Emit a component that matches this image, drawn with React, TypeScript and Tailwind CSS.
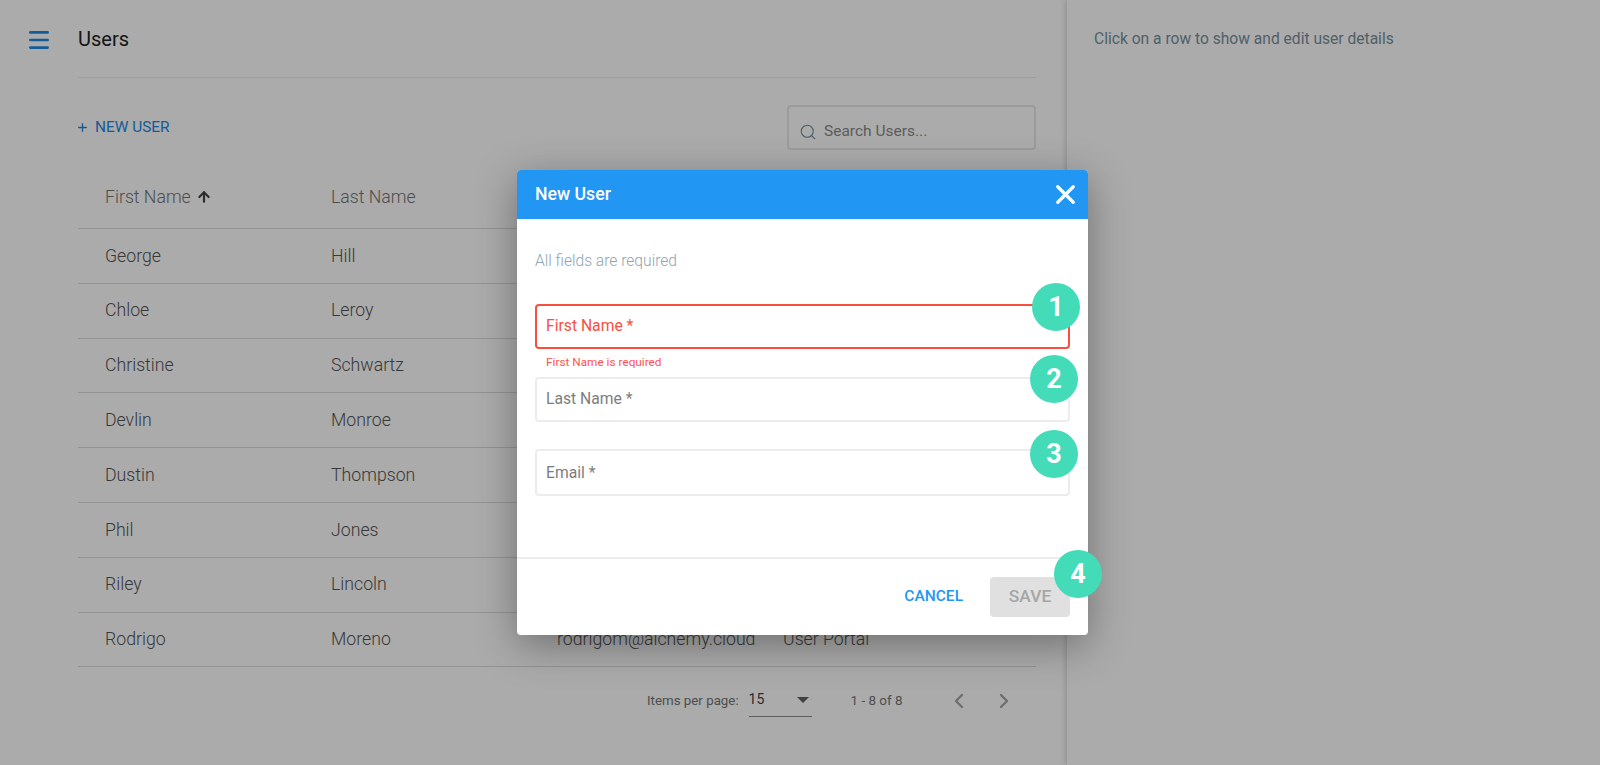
import { Menu, Plus, Search, ArrowUp, X, ChevronLeft, ChevronRight } from 'lucide-react'

const users = [
  { first: 'George', last: 'Hill' },
  { first: 'Chloe', last: 'Leroy' },
  { first: 'Christine', last: 'Schwartz' },
  { first: 'Devlin', last: 'Monroe' },
  { first: 'Dustin', last: 'Thompson' },
  { first: 'Phil', last: 'Jones' },
  { first: 'Riley', last: 'Lincoln' },
  { first: 'Rodrigo', last: 'Moreno', email: 'rodrigom@alchemy.cloud', app: 'User Portal' },
]

function Badge({ n, className }: { n: number; className: string }) {
  return (
    <div className={`absolute flex h-12 w-12 items-center justify-center rounded-full bg-[#43dbb8] text-[27px] font-bold text-white ${className}`}>
      {n}
    </div>
  )
}

function Field({ label, error, tall }: { label: string; error?: boolean; tall?: boolean }) {
  return (
    <div className={`flex items-center rounded-[4px] border-2 pl-[9px] text-[15.7px] ${tall ? 'h-[47px]' : 'h-[45px] pb-[2px]'} ${error ? 'border-[#f7503f] text-[#f7503f]' : 'border-[#ececec] text-[#7d7d7d]'}`}>
      {label}
    </div>
  )
}

export default function App() {
  return (
    <div className="relative flex h-[765px] w-full overflow-hidden bg-white font-['Roboto',sans-serif]">
      <div className="flex w-[1067px] shrink-0">
        <div className="w-[78px] shrink-0 pl-[26px] pt-[27px]">
          <Menu className="h-[26px] w-[26px] text-[#1e88e5]" strokeWidth={2.4} />
        </div>
        <div className="flex w-[958px] flex-col">
          <div className="flex h-[78px] items-start border-b border-[#ececec] pt-[25px] text-[20px] leading-[28px] text-[#212121]">
            Users
          </div>
          <div className="flex h-[74px] items-start justify-between">
            <div className="mt-[39px] -ml-[2px] flex items-center gap-[6px] text-[15.4px] leading-[20px] text-[#1e88e5]">
              <Plus className="h-[13px] w-[13px]" strokeWidth={2.5} />
              NEW USER
            </div>
            <div className="mt-[27px] flex h-[45px] w-[249px] items-center gap-[7px] rounded-[4px] border-2 border-[#e8e8e8] pl-[10px] pt-[8px] text-[15.5px] text-[#8a8a8a]">
              <Search className="h-[18px] w-[18px] text-[#78909c]" strokeWidth={1.5} />
              Search Users...
            </div>
          </div>
          <div className="flex h-[77px] items-center border-b border-[#dcdcdc] pl-[27px] pt-[14px] text-[17.7px] font-light text-[#757575]">
            <div className="flex w-[226px] items-center gap-[5px]">
              First Name
              <ArrowUp className="h-[16px] w-[16px] text-[#424242]" strokeWidth={3.2} />
            </div>
            <div>Last Name</div>
          </div>
          {users.map((u) => (
            <div key={u.first} className="flex h-[54.8px] items-center border-b border-[#dcdcdc] pl-[27px] text-[17.7px] font-light text-[#555555]">
              <div className="w-[226px]">{u.first}</div>
              <div className="w-[226px]">{u.last}</div>
              {u.email && <div className="w-[226px]">{u.email}</div>}
              {u.app && <div>{u.app}</div>}
            </div>
          ))}
          <div className="mt-[18px] flex items-center text-[13.3px] text-[#757575]">
            <div className="ml-[569px]">Items per page:</div>
            <div className="ml-[10px] flex h-[32px] w-[63px] items-center justify-between border-b border-[#8a8a8a] pb-[2px] pr-[3px] text-[14px] text-[#424242]">
              15
              <span className="h-0 w-0 border-x-[6px] border-t-[6px] border-x-transparent border-t-[#616161]" />
            </div>
            <div className="ml-[39px] text-[13.4px]">1 - 8 of 8</div>
            <ChevronLeft className="ml-[45px] h-6 w-6 text-[#a6a6a6]" strokeWidth={2.4} />
            <ChevronRight className="ml-[21px] h-6 w-6 text-[#a6a6a6]" strokeWidth={2.4} />
          </div>
        </div>
      </div>
      <div className="flex-1 pl-[27px] pt-[29px] text-[15.6px] leading-[20px] text-[#78909c] shadow-[-2px_0_5px_rgba(0,0,0,0.15)]">
        Click on a row to show and edit user details
      </div>

      <div className="absolute inset-0 bg-black/33" />

      <div className="absolute left-[517px] top-[170px] flex h-[465px] w-[571px] flex-col rounded-[4px] bg-white shadow-[0_10px_40px_rgba(0,0,0,0.35)]">
        <div className="flex h-[49px] items-center justify-between rounded-t-[4px] bg-[#2196f3] pb-[1px] pl-[18px] pr-[7px] text-[17.7px] font-medium text-white">
          New User
          <X className="h-[31px] w-[31px]" strokeWidth={2.5} />
        </div>
        <div className="flex flex-1 flex-col px-[18px] pt-[32px]">
          <div className="text-[15.6px] font-light leading-[20px] text-[#90a4ae]">All fields are required</div>
          <div className="mt-[33px]">
            <Field label="First Name *" error />
          </div>
          <div className="mt-[7px] pl-[11px] text-[11.8px] leading-[13px] text-[#ff5252]">First Name is required</div>
          <div className="mt-[8px]">
            <Field label="Last Name *" />
          </div>
          <div className="mt-[27px]">
            <Field label="Email *" tall />
          </div>
        </div>
        <div className="flex h-[78px] items-center justify-end gap-[27px] border-t-2 border-[#ececec] pb-[1px] pr-[18px] text-[15.5px] font-medium">
          <div className="text-[#2196f3]">CANCEL</div>
          <div className="flex h-[40px] w-[80px] items-center justify-center rounded-[4px] bg-[#e0e0e0] text-[17.4px] text-[#a6a6a6]">SAVE</div>
        </div>
        <Badge n={1} className="left-[515px] top-[113px]" />
        <Badge n={2} className="left-[513px] top-[185px]" />
        <Badge n={3} className="left-[513px] top-[260px]" />
        <Badge n={4} className="left-[537px] top-[380px]" />
      </div>
    </div>
  )
}
